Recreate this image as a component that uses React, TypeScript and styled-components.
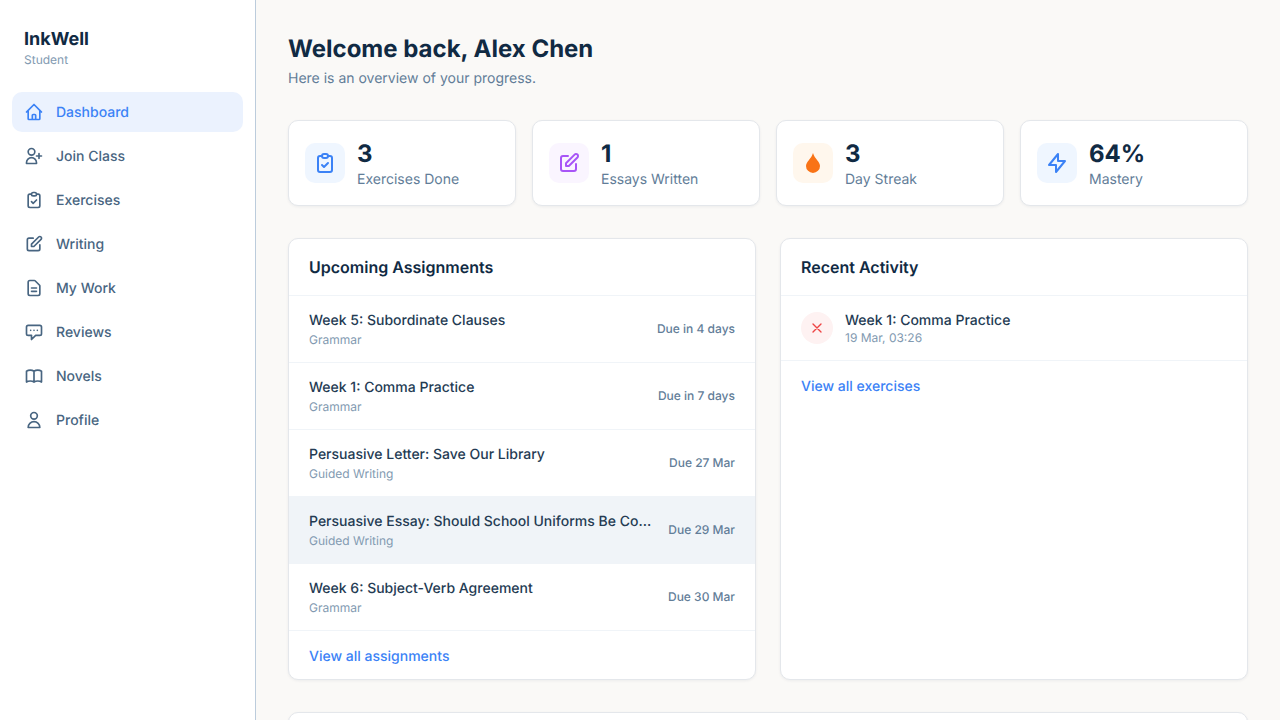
import styled, { createGlobalStyle } from "styled-components"
import {
  HiOutlineHome,
  HiOutlineUserAdd,
  HiOutlineClipboardCheck,
  HiOutlinePencilAlt,
  HiOutlineDocumentText,
  HiOutlineChatAlt,
  HiOutlineBookOpen,
  HiOutlineUser,
  HiOutlineLightningBolt,
  HiOutlineX,
} from "react-icons/hi"

const GlobalStyle = createGlobalStyle`
  html, body {
    margin: 0;
    height: 100%;
    background: #faf9f7;
    font-family: "Inter", "Liberation Sans", sans-serif;
    color: #102a43;
    overflow: hidden;
    text-rendering: geometricPrecision;
    -webkit-font-smoothing: antialiased;
  }
  * {
    box-sizing: border-box;
  }
`

const Layout = styled.div`
  display: flex;
  height: 720px;
  overflow: hidden;
`

const Sidebar = styled.aside`
  width: 256px;
  flex-shrink: 0;
  background: #ffffff;
  border-right: 1px solid #bcccdc;
  display: flex;
  flex-direction: column;
`

const Brand = styled.div`
  padding: 29px 24px 24px;
`

const BrandName = styled.div`
  font-size: 18px;
  line-height: 22px;
  font-weight: 700;
  color: #102a43;
`

const BrandRole = styled.div`
  font-size: 12px;
  line-height: 16px;
  margin-top: 1px;
  color: #829ab1;
`

const Nav = styled.nav`
  display: flex;
  flex-direction: column;
  gap: 4px;
  padding: 0 12px;
`

const NavItem = styled.a<{ $active?: boolean }>`
  display: flex;
  align-items: center;
  gap: 12px;
  height: 40px;
  padding: 0 12px;
  border-radius: 10px;
  font-size: 14px;
  font-weight: 500;
  color: ${(p) => (p.$active ? "#3b82f6" : "#486581")};
  background: ${(p) => (p.$active ? "#ebf2fe" : "transparent")};
`

const Main = styled.main`
  flex: 1;
  padding: 32px;
  min-width: 0;
`

const Title = styled.h1`
  margin: 0;
  font-size: 24px;
  line-height: 34px;
  font-weight: 700;
  color: #102a43;
`

const Subtitle = styled.p`
  margin: 3px 0 0;
  font-size: 14px;
  line-height: 20px;
  color: #627d98;
`

const Stats = styled.div`
  display: grid;
  grid-template-columns: repeat(4, 1fr);
  gap: 16px;
  margin-top: 31px;
`

const Card = styled.div`
  background: #ffffff;
  border: 1px solid #e4e7eb;
  border-radius: 10px;
  box-shadow: 0 1px 3px rgba(16, 42, 67, 0.06);
`

const StatCard = styled(Card)`
  display: flex;
  align-items: center;
  gap: 12px;
  padding: 16px;
`

const StatIcon = styled.div<{ $bg: string; $color: string }>`
  width: 40px;
  height: 40px;
  border-radius: 10px;
  display: flex;
  align-items: center;
  justify-content: center;
  background: ${(p) => p.$bg};
  color: ${(p) => p.$color};
`

const StatBody = styled.div`
  margin: 1px 0 -1px;
`

const StatValue = styled.div`
  font-size: 24px;
  line-height: 32px;
  font-weight: 700;
  color: #102a43;
`

const StatLabel = styled.div`
  font-size: 14px;
  line-height: 20px;
  color: #627d98;
`

const Panels = styled.div`
  display: grid;
  grid-template-columns: 1fr 1fr;
  gap: 24px;
  margin-top: 32px;
`

const Panel = styled(Card)`
  height: 442px;
  overflow: hidden;
`

const PanelHeader = styled.h2`
  margin: 0;
  padding: 0 20px;
  height: 57px;
  display: flex;
  align-items: center;
  font-size: 16px;
  font-weight: 600;
  color: #102a43;
  border-bottom: 1px solid #f0f4f8;
`

const Row = styled.div<{ $highlight?: boolean }>`
  display: flex;
  align-items: center;
  justify-content: space-between;
  gap: 16px;
  height: 67px;
  padding: 0 20px;
  border-bottom: 1px solid #f0f4f8;
  background: ${(p) => (p.$highlight ? "#f0f4f8" : "transparent")};
`

const RowText = styled.div`
  min-width: 0;
  flex: 1;
`

const RowTitle = styled.div`
  padding-top: 1px;
  font-size: 14px;
  line-height: 20px;
  font-weight: 500;
  color: #243b53;
  white-space: nowrap;
  overflow: hidden;
  text-overflow: ellipsis;
`

const RowSub = styled.div`
  font-size: 12px;
  line-height: 16px;
  margin-top: 1px;
  color: #829ab1;
`

const RowDue = styled.div`
  margin-bottom: 2px;
  font-size: 12px;
  font-weight: 500;
  white-space: nowrap;
  color: #627d98;
`

const PanelLink = styled.a`
  display: block;
  padding: 16px 20px;
  font-size: 14px;
  line-height: 20px;
  font-weight: 500;
  color: #3b82f6;
`

const ActivityRow = styled.div`
  display: flex;
  align-items: center;
  gap: 12px;
  height: 65px;
  padding: 0 20px;
  border-bottom: 1px solid #f0f4f8;
`

const ActivityIcon = styled.div`
  width: 32px;
  height: 32px;
  border-radius: 50%;
  flex-shrink: 0;
  display: flex;
  align-items: center;
  justify-content: center;
  background: #fef2f2;
  color: #ef4444;
`

const ActivitySub = styled(RowSub)`
  margin-top: -1px;
`

const NextPanel = styled(Card)`
  height: 200px;
  margin-top: 32px;
`

const DropIcon = () => (
  <svg width="24" height="24" viewBox="0 0 24 24" fill="currentColor">
    <path d="M12 2c.8 3 2.500 5 4.200 7.200 1.400 1.800 2.800 3.500 2.800 5.700a7 7 0 0 1-14 0c0-2.200 1.400-3.900 2.800-5.700C9.500 7 11.200 5 12 2z" />
  </svg>
)

const navItems = [
  { label: "Dashboard", Icon: HiOutlineHome, active: true },
  { label: "Join Class", Icon: HiOutlineUserAdd },
  { label: "Exercises", Icon: HiOutlineClipboardCheck },
  { label: "Writing", Icon: HiOutlinePencilAlt },
  { label: "My Work", Icon: HiOutlineDocumentText },
  { label: "Reviews", Icon: HiOutlineChatAlt },
  { label: "Novels", Icon: HiOutlineBookOpen },
  { label: "Profile", Icon: HiOutlineUser },
]

const assignments = [
  { title: "Week 5: Subordinate Clauses", type: "Grammar", due: "Due in 4 days" },
  { title: "Week 1: Comma Practice", type: "Grammar", due: "Due in 7 days" },
  { title: "Persuasive Letter: Save Our Library", type: "Guided Writing", due: "Due 27 Mar" },
  {
    title: "Persuasive Essay: Should School Uniforms Be Compulsory?",
    type: "Guided Writing",
    due: "Due 29 Mar",
    highlight: true,
  },
  { title: "Week 6: Subject-Verb Agreement", type: "Grammar", due: "Due 30 Mar" },
]

const App = () => {
  return (
    <Layout>
      <GlobalStyle />
      <Sidebar>
        <Brand>
          <BrandName>InkWell</BrandName>
          <BrandRole>Student</BrandRole>
        </Brand>
        <Nav>
          {navItems.map(({ label, Icon, active }) => (
            <NavItem key={label} $active={active}>
              <Icon size={20} />
              {label}
            </NavItem>
          ))}
        </Nav>
      </Sidebar>
      <Main>
        <Title>Welcome back, Alex Chen</Title>
        <Subtitle>Here is an overview of your progress.</Subtitle>

        <Stats>
          <StatCard>
            <StatIcon $bg="#eff6ff" $color="#3b82f6">
              <HiOutlineClipboardCheck size={24} />
            </StatIcon>
            <StatBody>
              <StatValue>3</StatValue>
              <StatLabel>Exercises Done</StatLabel>
            </StatBody>
          </StatCard>
          <StatCard>
            <StatIcon $bg="#faf5ff" $color="#a855f7">
              <HiOutlinePencilAlt size={24} />
            </StatIcon>
            <StatBody>
              <StatValue>1</StatValue>
              <StatLabel>Essays Written</StatLabel>
            </StatBody>
          </StatCard>
          <StatCard>
            <StatIcon $bg="#fff7ed" $color="#f97316">
              <DropIcon />
            </StatIcon>
            <StatBody>
              <StatValue>3</StatValue>
              <StatLabel>Day Streak</StatLabel>
            </StatBody>
          </StatCard>
          <StatCard>
            <StatIcon $bg="#eff6ff" $color="#3b82f6">
              <HiOutlineLightningBolt size={24} />
            </StatIcon>
            <StatBody>
              <StatValue>64%</StatValue>
              <StatLabel>Mastery</StatLabel>
            </StatBody>
          </StatCard>
        </Stats>

        <Panels>
          <Panel>
            <PanelHeader>Upcoming Assignments</PanelHeader>
            {assignments.map((a) => (
              <Row key={a.title} $highlight={a.highlight}>
                <RowText>
                  <RowTitle>{a.title}</RowTitle>
                  <RowSub>{a.type}</RowSub>
                </RowText>
                <RowDue>{a.due}</RowDue>
              </Row>
            ))}
            <PanelLink>View all assignments</PanelLink>
          </Panel>
          <Panel>
            <PanelHeader>Recent Activity</PanelHeader>
            <ActivityRow>
              <ActivityIcon>
                <HiOutlineX size={16} />
              </ActivityIcon>
              <RowText>
                <RowTitle>Week 1: Comma Practice</RowTitle>
                <ActivitySub>19 Mar, 03:26</ActivitySub>
              </RowText>
            </ActivityRow>
            <PanelLink>View all exercises</PanelLink>
          </Panel>
        </Panels>

        <NextPanel />
      </Main>
    </Layout>
  )
}

export default App
